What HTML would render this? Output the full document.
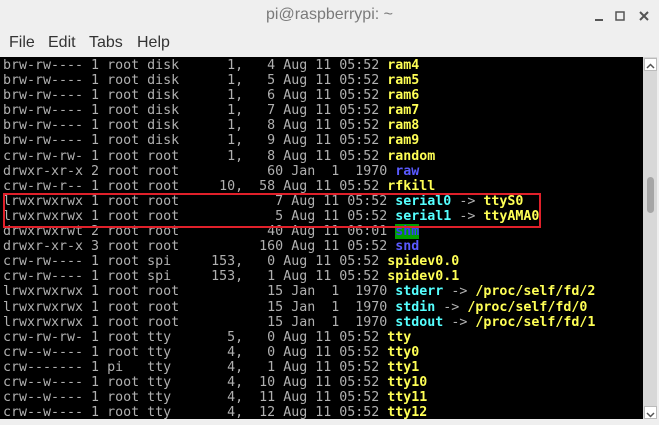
<!DOCTYPE html>
<html><head><style>
html,body{margin:0;padding:0;width:659px;height:419px;overflow:hidden;background:#efefef;font-family:"Liberation Sans",sans-serif}
.title{position:absolute;top:0;left:0;width:659px;height:30px;text-align:center;line-height:30px;font-size:16px;color:#7a7a7a}
.menu{position:absolute;top:31px;left:9px;font-size:16px;color:#333;line-height:24px}
.menu span{position:absolute;top:0}
.term{position:absolute;left:0;top:57px;width:643px;height:362px;background:#000}
pre{margin:0;position:absolute;left:3px;top:1px;font-family:"DejaVu Sans Mono",monospace;font-size:13.3px;line-height:15.1px;color:#b0b0b0}
.y{color:#ffff55;font-weight:bold}.c{color:#55ffff;font-weight:bold}.bl{color:#5a5aff;font-weight:bold}
.g{background:#00a000;color:#3a3aff;font-weight:bold}
.box{position:absolute;left:3px;top:193px;width:534px;height:31px;border:2px solid #e0202a}
.sb{position:absolute;left:643px;top:57px;width:14px;height:362px;background:#d8d8d8}
.thumb{position:absolute;left:4px;top:120px;width:7px;height:36px;border-radius:4px;background:#a6a6a6}
.arr{position:absolute;left:1px;width:11px;height:11px;background:#fff;border:1px solid #bbb}
</style></head><body>
<div class="title">pi@raspberrypi: ~</div>
<svg style="position:absolute;left:590px;top:8px" width="65" height="16">
<rect x="5" y="11" width="8" height="2" fill="#555"/>
<rect x="26" y="4" width="8" height="8" fill="none" stroke="#555" stroke-width="1.5"/>
<path d="M50 4 L58 12 M58 4 L50 12" stroke="#555" stroke-width="2"/>
</svg>
<div class="menu"><span style="left:0">File</span><span style="left:39px">Edit</span><span style="left:80px">Tabs</span><span style="left:128px">Help</span></div>
<div class="term"><pre>brw-rw---- 1 root disk      1,   4 Aug 11 05:52 <span class="y">ram4</span>
brw-rw---- 1 root disk      1,   5 Aug 11 05:52 <span class="y">ram5</span>
brw-rw---- 1 root disk      1,   6 Aug 11 05:52 <span class="y">ram6</span>
brw-rw---- 1 root disk      1,   7 Aug 11 05:52 <span class="y">ram7</span>
brw-rw---- 1 root disk      1,   8 Aug 11 05:52 <span class="y">ram8</span>
brw-rw---- 1 root disk      1,   9 Aug 11 05:52 <span class="y">ram9</span>
crw-rw-rw- 1 root root      1,   8 Aug 11 05:52 <span class="y">random</span>
drwxr-xr-x 2 root root           60 Jan  1  1970 <span class="bl">raw</span>
crw-rw-r-- 1 root root     10,  58 Aug 11 05:52 <span class="y">rfkill</span>
lrwxrwxrwx 1 root root            7 Aug 11 05:52 <span class="c">serial0</span> -&gt; <span class="y">ttyS0</span>
lrwxrwxrwx 1 root root            5 Aug 11 05:52 <span class="c">serial1</span> -&gt; <span class="y">ttyAMA0</span>
drwxrwxrwt 2 root root           40 Aug 11 06:01 <span class="g">shm</span>
drwxr-xr-x 3 root root          160 Aug 11 05:52 <span class="bl">snd</span>
crw-rw---- 1 root spi     153,   0 Aug 11 05:52 <span class="y">spidev0.0</span>
crw-rw---- 1 root spi     153,   1 Aug 11 05:52 <span class="y">spidev0.1</span>
lrwxrwxrwx 1 root root           15 Jan  1  1970 <span class="c">stderr</span> -&gt; <span class="y">/proc/self/fd/2</span>
lrwxrwxrwx 1 root root           15 Jan  1  1970 <span class="c">stdin</span> -&gt; <span class="y">/proc/self/fd/0</span>
lrwxrwxrwx 1 root root           15 Jan  1  1970 <span class="c">stdout</span> -&gt; <span class="y">/proc/self/fd/1</span>
crw-rw-rw- 1 root tty       5,   0 Aug 11 05:52 <span class="y">tty</span>
crw--w---- 1 root tty       4,   0 Aug 11 05:52 <span class="y">tty0</span>
crw------- 1 pi   tty       4,   1 Aug 11 05:52 <span class="y">tty1</span>
crw--w---- 1 root tty       4,  10 Aug 11 05:52 <span class="y">tty10</span>
crw--w---- 1 root tty       4,  11 Aug 11 05:52 <span class="y">tty11</span>
crw--w---- 1 root tty       4,  12 Aug 11 05:52 <span class="y">tty12</span></pre></div>
<div class="box"></div>
<div class="sb">
<div class="arr" style="top:1px"><svg width="11" height="11"><path d="M2 7 L5.5 3.5 L9 7" stroke="#555" stroke-width="1.5" fill="none"/></svg></div>
<div class="thumb"></div>
<div class="arr" style="top:349px"><svg width="11" height="11"><path d="M2 4 L5.5 7.5 L9 4" stroke="#555" stroke-width="1.5" fill="none"/></svg></div>
</div>
</body></html>
